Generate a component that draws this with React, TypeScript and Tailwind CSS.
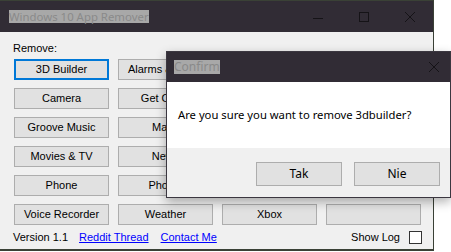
const apps = [
  "3D Builder", "Alarms & Clock", "Calculator", "Calendar & Mail",
  "Camera", "Get Office", "Get Skype", "Get Started",
  "Groove Music", "Maps", "Microsoft Solitaire", "Money",
  "Movies & TV", "News", "OneNote", "People",
  "Phone", "Photos", "Store", "Sports",
  "Voice Recorder", "Weather", "Xbox", "",
];

const TitleControls = () => (
  <div className="flex items-center h-full">
    <svg width="46" height="30" viewBox="0 0 46 30">
      <line x1="18" y1="16.5" x2="28" y2="16.5" stroke="#151317" strokeWidth="1" />
    </svg>
    <svg width="46" height="30" viewBox="0 0 46 30">
      <rect x="18.5" y="10.5" width="9" height="9" fill="none" stroke="#151317" strokeWidth="1" />
    </svg>
    <svg width="46" height="30" viewBox="0 0 46 30">
      <path d="M18 10 L28 20 M28 10 L18 20" stroke="#151317" strokeWidth="1" />
    </svg>
  </div>
);

const App = () => {
  return (
    <div className="relative w-[451px] h-[252px] bg-white overflow-hidden">
      {/* main window */}
      <div className="absolute left-0 top-0 w-[434px] h-[251px] border-t border-r border-b-2 border-[#3a4136] flex flex-col">
        <div className="h-[31px] bg-[#312c35] flex items-center justify-between shrink-0">
          <span
            className="ml-[9px] bg-[#a8a8a8] text-[#8a8a8a] text-[11.4px] leading-[13px] h-[13px]"
            style={{ fontFamily: '"Noto Sans", sans-serif' }}
          >
            Windows 10 App Remover
          </span>
          <TitleControls />
        </div>
        <div
          className="flex-1 bg-[#f0f0f0] text-[11px] text-black"
          style={{ fontFamily: '"Liberation Sans", Arial, sans-serif' }}
        >
          <div className="pl-[13px] pt-[10px] leading-[13px]">Remove:</div>
          <div className="grid grid-cols-[repeat(4,95px)] gap-x-[9px] gap-y-[8px] pl-[14px] mt-[4px]">
            {apps.map((a, i) => (
              <div
                key={i}
                className={
                  i === 0
                    ? "h-[21px] bg-[#e1e1e1] border-2 border-[#0078d7] flex items-center justify-center whitespace-nowrap overflow-hidden"
                    : "h-[21px] bg-[#e1e1e1] border border-[#adadad] flex items-center justify-center whitespace-nowrap overflow-hidden"
                }
              >
                {a}
              </div>
            ))}
          </div>
          <div className="flex items-center mt-[5px] pl-[13px] pr-[11px] h-[14px]">
            <span>Version 1.1</span>
            <a className="ml-[11px] text-[#0000ff] underline">Reddit Thread</a>
            <a className="ml-[12px] text-[#0000ff] underline">Contact Me</a>
            <span className="ml-auto">Show Log</span>
            <span className="ml-[9px] w-[13px] h-[13px] bg-white border border-[#333]" />
          </div>
        </div>
      </div>

      {/* confirm dialog */}
      <div className="absolute left-[166px] top-[51px] w-[285px] h-[147px] border border-[#3b3740] flex flex-col shadow-[0_4px_10px_rgba(0,0,0,0.3)]">
        <div className="h-[30px] bg-[#312c35] flex items-center justify-between shrink-0">
          <span
            className="ml-[7px] bg-[#a8a8a8] text-[#8a8a8a] text-[12px] leading-[14px] h-[14px]"
            style={{ fontFamily: '"Noto Sans", sans-serif' }}
          >
            Confirm
          </span>
          <svg width="30" height="30" viewBox="0 0 30 30" className="mr-[1px]">
            <path d="M10 10 L20 20 M20 10 L10 20" stroke="#151317" strokeWidth="1" />
          </svg>
        </div>
        <div
          className="h-[66px] bg-white flex items-center pl-[11px] text-[11.25px] text-black"
          style={{ fontFamily: '"Noto Sans", sans-serif' }}
        >
          Are you sure you want to remove 3dbuilder?
        </div>
        <div
          className="flex-1 bg-[#f0f0f0] flex items-start justify-end gap-[12px] pr-[10px] pt-[14px] text-[12px] text-black"
          style={{ fontFamily: '"Noto Sans", sans-serif' }}
        >
          <div className="w-[86px] h-[24px] bg-[#e1e1e1] border border-[#adadad] flex items-center justify-center">Tak</div>
          <div className="w-[86px] h-[24px] bg-[#e1e1e1] border border-[#adadad] flex items-center justify-center">Nie</div>
        </div>
      </div>
    </div>
  );
};

export default App;
